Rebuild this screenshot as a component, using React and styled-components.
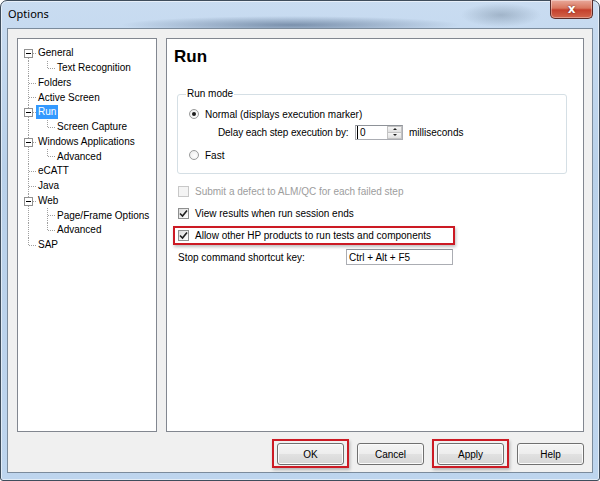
import React from "react"
import styled, { createGlobalStyle, css } from "styled-components"

const GlobalStyle = createGlobalStyle`
  html, body {
    margin: 0;
    padding: 0;
    background: #ffffff;
  }
  body {
    width: 600px;
    height: 481px;
    overflow: hidden;
    font-family: "Liberation Sans", Arial, sans-serif;
    font-size: 10px;
    color: #000;
  }
`

const ROW = 14.75

// Window chrome
const Window = styled.div`
  width: 600px;
  height: 481px;
  box-sizing: border-box;
  display: flex;
  flex-direction: column;
  padding: 0 6px 7px;
  border: 1px solid #3f4d5c;
  border-radius: 7px 7px 3px 3px;
  background:
    radial-gradient(ellipse 170px 9px at 290px 24px, rgba(30, 55, 90, 0.45), transparent),
    radial-gradient(ellipse 40px 12px at 500px 14px, rgba(70, 90, 110, 0.3), transparent),
    linear-gradient(180deg, #c9dcf1 0%, #b9d1ea 35%, #bed5ee 100%);
  box-shadow: inset 0 0 0 1px rgba(255, 255, 255, 0.55);
`

const TitleBar = styled.div`
  height: 27px;
  display: flex;
  align-items: flex-start;
  justify-content: space-between;
`

const Title = styled.span`
  margin: 5px 0 0 1px;
  font-family: "Noto Sans", "Liberation Sans", sans-serif;
  font-size: 11px;
  line-height: 15px;
  color: #000;
`

const CloseButton = styled.div`
  width: 43px;
  height: 19px;
  margin-top: -1px;
  box-sizing: border-box;
  display: flex;
  align-items: center;
  justify-content: center;
  border: 1px solid #5a2b28;
  border-top: none;
  border-radius: 0 0 5px 5px;
  background: linear-gradient(180deg, #e9a99b 0%, #d9775f 45%, #c4402c 55%, #d2664c 100%);
  box-shadow: inset 0 0 0 1px rgba(255, 255, 255, 0.35);
  color: #fff;
  font-family: "DejaVu Sans", sans-serif;
  font-size: 12px;
  font-weight: bold;
  text-shadow: 0 0 2px #5a1a12;
`

const Client = styled.div`
  flex: 1;
  display: flex;
  flex-direction: column;
  padding: 9px 8px 0 9px;
  border: 1px solid #7b8b9c;
  background: #f0f0f0;
`

const Panes = styled.div`
  height: 394px;
  display: flex;
  gap: 9px;
`

// Tree
const TreePane = styled.div`
  width: 140px;
  box-sizing: border-box;
  padding-top: 7px;
  border: 1px solid #828790;
  background: #fff;
`

const TreeRow = styled.div`
  display: flex;
  align-items: center;
  height: ${ROW}px;
  white-space: nowrap;
`

const TreeLabel = styled.span`
  padding: 0 1px;
  line-height: 14px;
  ${(p) =>
    p.$selected &&
    css`
      padding: 0 2px;
      margin-left: -1px;
      background: #3399ff;
      color: #fff;
    `}
`

const tree = [
  { label: "General", level: 0, expander: true, first: true },
  { label: "Text Recognition", level: 1, lastChild: true },
  { label: "Folders", level: 0 },
  { label: "Active Screen", level: 0 },
  { label: "Run", level: 0, expander: true, selected: true },
  { label: "Screen Capture", level: 1, lastChild: true },
  { label: "Windows Applications", level: 0, expander: true },
  { label: "Advanced", level: 1, lastChild: true },
  { label: "eCATT", level: 0 },
  { label: "Java", level: 0 },
  { label: "Web", level: 0, expander: true },
  { label: "Page/Frame Options", level: 1 },
  { label: "Advanced", level: 1, lastChild: true },
  { label: "SAP", level: 0, last: true },
]

function TreeGuide({ item }) {
  const w = item.level ? 38 : 19
  const mid = 7.5
  return (
    <svg width={w} height={ROW} viewBox={`0 0 ${w} ${ROW}`}>
      <g stroke="#a0a0a0" strokeDasharray="1 1" shapeRendering="crispEdges">
        <line x1="10.5" x2="10.5" y1={item.first ? mid : 0} y2={item.last ? mid : ROW} />
        {item.level === 0 && <line x1="11" x2="19" y1={mid} y2={mid} />}
        {item.level === 1 && (
          <>
            <line x1="29.5" x2="29.5" y1="0" y2={item.lastChild ? mid : ROW} />
            <line x1="30" x2="38" y1={mid} y2={mid} />
          </>
        )}
      </g>
      {item.expander && (
        <g shapeRendering="crispEdges">
          <rect x="6.5" y={mid - 4} width="8" height="8" fill="#fff" stroke="#919191" />
          <line x1="8" x2="13" y1={mid} y2={mid} stroke="#000" />
        </g>
      )}
    </svg>
  )
}

// Page
const Page = styled.div`
  flex: 1;
  border: 1px solid #828790;
  background: #fff;
`

const Heading = styled.h2`
  margin: 8px 0 0 7px;
  font-size: 17px;
  font-weight: bold;
  line-height: 20px;
`

const Body = styled.div`
  padding-left: 10px;
`

const GroupBox = styled.fieldset`
  width: 390px;
  box-sizing: border-box;
  margin: 21px 0 0;
  padding: 6px 10px 10px 11px;
  border: 1px solid #d5dfe5;
  border-radius: 3px;
`

const Legend = styled.legend`
  margin-left: -3px;
  padding: 0 1px;
  line-height: 12px;
`

const OptionRow = styled.div`
  display: flex;
  align-items: center;
  height: 16px;
  gap: 6px;
  margin-top: ${(p) => p.$gap || 0}px;
  padding-left: ${(p) => p.$indent || 0}px;
  white-space: nowrap;
`

const Radio = styled.span`
  width: 10px;
  height: 10px;
  box-sizing: border-box;
  border-radius: 50%;
  border: 1px solid #9a9b9b;
  background: radial-gradient(circle at 60% 60%, #ffffff 0%, #e8e8e8 100%);
  display: flex;
  align-items: center;
  justify-content: center;
  ${(p) =>
    p.$checked &&
    css`
      &::after {
        content: "";
        width: 4px;
        height: 4px;
        border-radius: 50%;
        background: #1c1c1c;
      }
    `}
`

const DelayLabel = styled.span`
  flex: none;
  width: 131px;
  letter-spacing: -0.1px;
`

const SpinBox = styled.div`
  width: 48px;
  height: 15px;
  box-sizing: border-box;
  display: flex;
  border: 1px solid #abadb3;
  border-top-color: #8e9298;
  background: #fff;
`

const SpinValue = styled.span`
  flex: 1;
  display: flex;
  align-items: center;
  padding-left: 2px;
  line-height: 13px;
  border-left: 1px solid #000;
  margin-left: 1px;
`

const Spinner = styled.div`
  width: 15px;
  display: flex;
  flex-direction: column;
`

const SpinHalf = styled.div`
  flex: 1;
  display: flex;
  align-items: center;
  justify-content: center;
  border: 1px solid #c3c3c3;
  background: linear-gradient(180deg, #f6f6f6, #e0e0e0);
  & + & {
    border-top: none;
  }
`

const Arrow = styled.span`
  width: 0;
  height: 0;
  border-left: 2px solid transparent;
  border-right: 2px solid transparent;
  ${(p) =>
    p.$down
      ? css`border-top: 2px solid #222;`
      : css`border-bottom: 2px solid #222;`}
`

const CheckRow = styled.div`
  position: relative;
  display: flex;
  align-items: center;
  height: 16px;
  gap: 6px;
  margin-top: ${(p) => p.$gap}px;
  padding-left: 1px;
  white-space: nowrap;
  color: ${(p) => (p.$disabled ? "#9d9d9d" : "#000")};
  ${(p) =>
    p.$highlight &&
    css`
      &::after {
        content: "";
        position: absolute;
        left: -4px;
        top: -1px;
        width: 278px;
        bottom: -2px;
        border: 2px solid #cc1a24;
        box-shadow: 1px 2px 3px rgba(0, 0, 0, 0.25);
      }
    `}
`

const CheckBox = styled.span`
  width: 11px;
  height: 11px;
  box-sizing: border-box;
  display: flex;
  align-items: center;
  justify-content: center;
  border: 1px solid ${(p) => (p.$disabled ? "#c8c8c8" : "#8e8f8f")};
  background: ${(p) => (p.$disabled ? "#f4f4f4" : "linear-gradient(135deg, #dcdcdc, #ffffff)")};
`

const FieldLabel = styled.span`
  width: 162px;
`

const TextField = styled.div`
  width: 107px;
  height: 16px;
  box-sizing: border-box;
  display: flex;
  align-items: center;
  padding-left: 2px;
  border: 1px solid #abadb3;
  border-top-color: #8e9298;
  background: #fff;
`

// Buttons
const ButtonRow = styled.div`
  display: flex;
  justify-content: flex-end;
  gap: 13px;
  margin-top: 11px;
`

const Button = styled.div`
  position: relative;
  width: 67px;
  height: 22px;
  box-sizing: border-box;
  display: flex;
  align-items: center;
  justify-content: center;
  border: 1px solid #707070;
  border-radius: 3px;
  background: linear-gradient(180deg, #f4f4f4 0%, #ededed 50%, #e1e1e1 51%, #d6d6d6 100%);
  box-shadow: inset 0 0 0 1px #fbfbfb;
  ${(p) =>
    p.$highlight &&
    css`
      &::after {
        content: "";
        position: absolute;
        top: -5px;
        bottom: -4px;
        left: -6px;
        right: -6px;
        border: 2px solid #cc1a24;
        box-shadow: 1px 2px 3px rgba(0, 0, 0, 0.25);
      }
    `}
`

function Check({ disabled, checked }) {
  return (
    <CheckBox $disabled={disabled}>
      {checked && (
        <svg width="9" height="9" viewBox="0 0 9 9">
          <path d="M1 4.5 L3.5 7 L8 1.5" fill="none" stroke="#1e1e1e" strokeWidth="1.6" />
        </svg>
      )}
    </CheckBox>
  )
}

export default function App() {
  return (
    <>
      <GlobalStyle />
      <Window>
        <TitleBar>
          <Title>Options</Title>
          <CloseButton>x</CloseButton>
        </TitleBar>
        <Client>
          <Panes>
            <TreePane>
              {tree.map((item, i) => (
                <TreeRow key={i}>
                  <TreeGuide item={item} />
                  <TreeLabel $selected={item.selected}>{item.label}</TreeLabel>
                </TreeRow>
              ))}
            </TreePane>
            <Page>
              <Heading>Run</Heading>
              <Body>
                <GroupBox>
                  <Legend>Run mode</Legend>
                  <OptionRow>
                    <Radio $checked />
                    <span>Normal (displays execution marker)</span>
                  </OptionRow>
                  <OptionRow $gap={2} $indent={29}>
                    <DelayLabel>Delay each step execution by:</DelayLabel>
                    <SpinBox>
                      <SpinValue>0</SpinValue>
                      <Spinner>
                        <SpinHalf>
                          <Arrow />
                        </SpinHalf>
                        <SpinHalf>
                          <Arrow $down />
                        </SpinHalf>
                      </Spinner>
                    </SpinBox>
                    <span>milliseconds</span>
                  </OptionRow>
                  <OptionRow $gap={7}>
                    <Radio />
                    <span>Fast</span>
                  </OptionRow>
                </GroupBox>
                <CheckRow $gap={9} $disabled>
                  <Check disabled />
                  <span>Submit a defect to ALM/QC for each failed step</span>
                </CheckRow>
                <CheckRow $gap={6}>
                  <Check checked />
                  <span>View results when run session ends</span>
                </CheckRow>
                <CheckRow $gap={6} $highlight>
                  <Check checked />
                  <span>Allow other HP products to run tests and components</span>
                </CheckRow>
                <CheckRow $gap={6}>
                  <FieldLabel>Stop command shortcut key:</FieldLabel>
                  <TextField>Ctrl + Alt + F5</TextField>
                </CheckRow>
              </Body>
            </Page>
          </Panes>
          <ButtonRow>
            <Button $highlight>OK</Button>
            <Button>Cancel</Button>
            <Button $highlight>Apply</Button>
            <Button>Help</Button>
          </ButtonRow>
        </Client>
      </Window>
    </>
  )
}
